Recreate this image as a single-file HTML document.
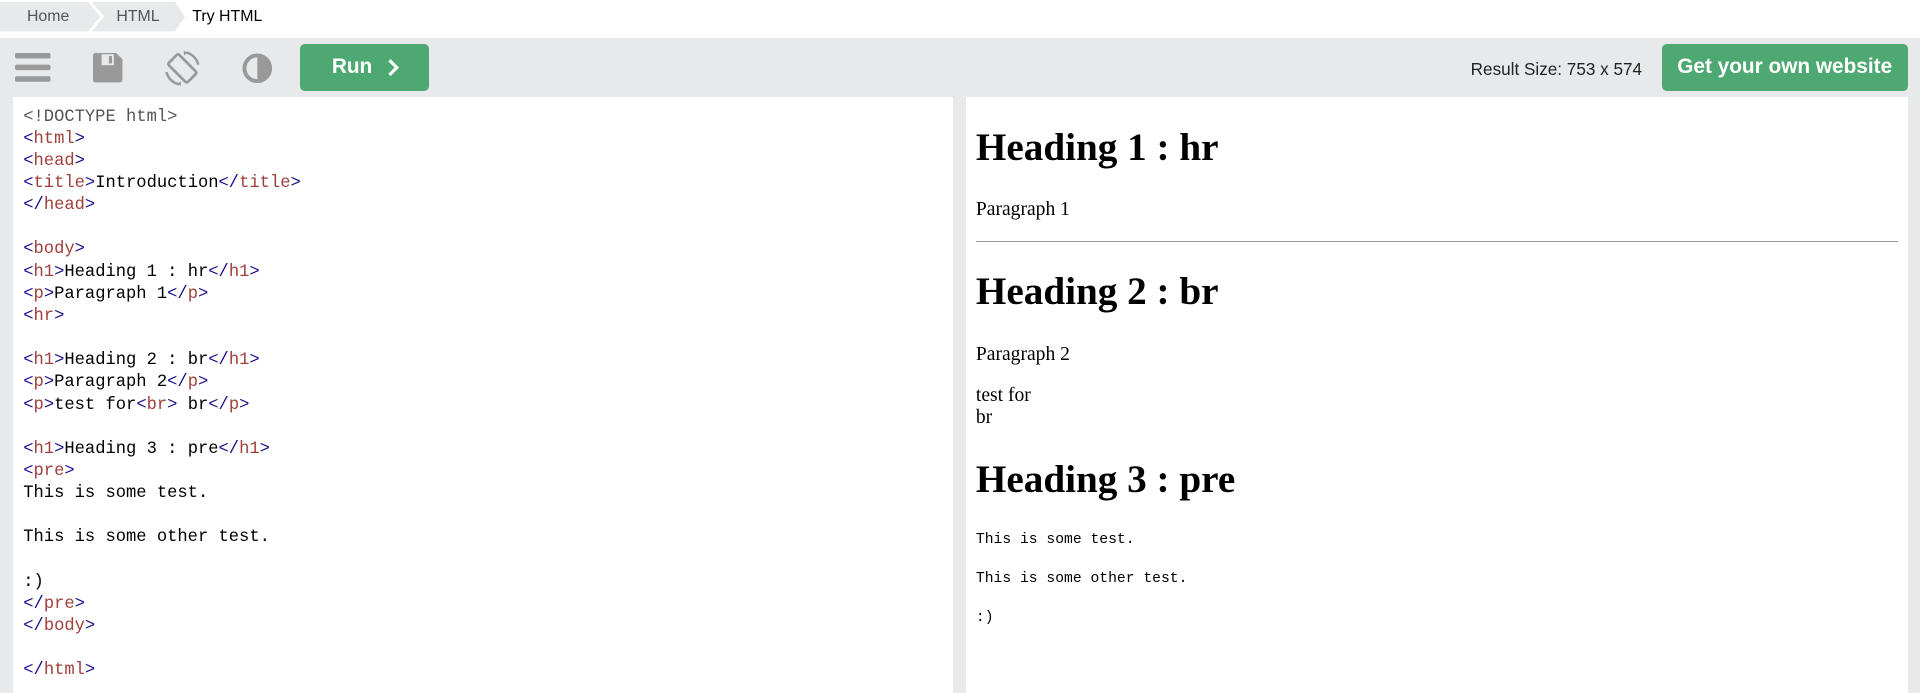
<!DOCTYPE html>
<html><head><meta charset="utf-8"><style>
html,body{margin:0;padding:0;background:#fff;overflow:hidden}
#z{zoom:1.22449;width:1568px;height:566px;position:relative;overflow:hidden;font-family:"Liberation Sans",sans-serif}
.abs{position:absolute}
.bc{position:absolute;top:2px;height:24px;font-size:13px;line-height:24px;color:#555}
.tb{position:absolute;top:31px;left:0;width:1568px;height:535px;background:#e7e9eb}
.btn{position:absolute;top:36px;height:38px;background:#4ea872;border-radius:4px;color:#fff;font-weight:bold}
.code{position:absolute;left:11px;top:79px;width:767px;height:487px;background:#fff;font-family:"Liberation Mono",monospace;font-size:14px;line-height:18.1px;white-space:pre;padding:8px 0 0 8px;box-sizing:border-box;color:#000}
.t{color:#170f8a}.n{color:#a0403a}.d{color:#555}
.res{position:absolute;left:789px;top:79px;width:769px;height:487px;background:#fff;font-family:"Liberation Serif",serif;font-size:16px;color:#000;overflow:hidden}
.res h1{font-size:32px;margin:21.44px 0;line-height:40px}
.res p{margin:16px 0;line-height:18px}
.res hr{border:0;border-top:1px solid #999;margin:9px 0 11px}
.res pre{font-family:"Liberation Mono",monospace;font-size:12px;margin:13px 0;line-height:16px}
</style></head><body><div id="z">
<svg class="abs" style="left:0;top:2px" width="160" height="24"><polygon points="0,0 72,0 82,12 72,24 0,24" fill="#e7e9eb"/><polygon points="75,0 143,0 151,12 143,24 75,24 85,12" fill="#e7e9eb"/></svg>
<div class="bc" style="left:22px">Home</div>
<div class="bc" style="left:95px">HTML</div>
<div class="bc" style="left:157px;color:#000">Try HTML</div>
<div class="tb"></div>
<svg class="abs" style="left:12px;top:43px" width="30" height="24"><rect x="0" y="0" width="29" height="4.5" rx="1.5" fill="#999"/><rect x="0" y="9.5" width="29" height="4.5" rx="1.5" fill="#999"/><rect x="0" y="19" width="29" height="4.5" rx="1.5" fill="#999"/></svg>
<svg class="abs" style="left:76px;top:43px" width="25" height="25"><path d="M2 0H19L24 5V22a2 2 0 0 1-2 2H2a2 2 0 0 1-2-2V2a2 2 0 0 1 2-2z" fill="#999"/><rect x="7" y="1" width="10" height="9" fill="#e7e9eb"/><rect x="13" y="2.5" width="2.5" height="6" fill="#999"/></svg>
<svg class="abs" style="left:134px;top:41px" width="30" height="30" viewBox="0 0 30 30"><g transform="rotate(-45 15 15)"><rect x="9" y="4" width="12" height="22" rx="1.5" fill="none" stroke="#999" stroke-width="2.2"/></g><path d="M18 2A13.5 13.5 0 0 1 28 12" fill="none" stroke="#999" stroke-width="2"/><path d="M12 28A13.5 13.5 0 0 1 2 18" fill="none" stroke="#999" stroke-width="2"/><path d="M16 0.5L19 2.3L16.5 4.5z" fill="#999"/><path d="M14 29.5L11 27.7L13.5 25.5z" fill="#999"/></svg>
<svg class="abs" style="left:198px;top:43px" width="25" height="25"><circle cx="12.5" cy="12.5" r="10.5" fill="none" stroke="#999" stroke-width="3.2"/><path d="M12.5 2a10.5 10.5 0 0 1 0 21z" fill="#999"/></svg>
<div class="btn" style="left:245px;width:105px;font-size:17px;line-height:38px"><span style="position:absolute;left:26px">Run</span><svg class="abs" style="left:71px;top:12px" width="10" height="14"><path d="M2 1L8 7L2 13" fill="none" stroke="#fff" stroke-width="2.6"/></svg></div>
<div class="abs" style="left:1150px;top:48px;width:191px;text-align:right;font-size:14px;color:#222">Result Size: 753 x 574</div>
<div class="btn" style="left:1357px;width:201px;font-size:17px;line-height:38px;text-align:center">Get your own website</div>
<div class="code"><span class="d">&lt;!DOCTYPE html&gt;</span>
<span class="t">&lt;</span><span class="n">html</span><span class="t">&gt;</span>
<span class="t">&lt;</span><span class="n">head</span><span class="t">&gt;</span>
<span class="t">&lt;</span><span class="n">title</span><span class="t">&gt;</span>Introduction<span class="t">&lt;/</span><span class="n">title</span><span class="t">&gt;</span>
<span class="t">&lt;/</span><span class="n">head</span><span class="t">&gt;</span>

<span class="t">&lt;</span><span class="n">body</span><span class="t">&gt;</span>
<span class="t">&lt;</span><span class="n">h1</span><span class="t">&gt;</span>Heading 1 : hr<span class="t">&lt;/</span><span class="n">h1</span><span class="t">&gt;</span>
<span class="t">&lt;</span><span class="n">p</span><span class="t">&gt;</span>Paragraph 1<span class="t">&lt;/</span><span class="n">p</span><span class="t">&gt;</span>
<span class="t">&lt;</span><span class="n">hr</span><span class="t">&gt;</span>

<span class="t">&lt;</span><span class="n">h1</span><span class="t">&gt;</span>Heading 2 : br<span class="t">&lt;/</span><span class="n">h1</span><span class="t">&gt;</span>
<span class="t">&lt;</span><span class="n">p</span><span class="t">&gt;</span>Paragraph 2<span class="t">&lt;/</span><span class="n">p</span><span class="t">&gt;</span>
<span class="t">&lt;</span><span class="n">p</span><span class="t">&gt;</span>test for<span class="t">&lt;</span><span class="n">br</span><span class="t">&gt;</span> br<span class="t">&lt;/</span><span class="n">p</span><span class="t">&gt;</span>

<span class="t">&lt;</span><span class="n">h1</span><span class="t">&gt;</span>Heading 3 : pre<span class="t">&lt;/</span><span class="n">h1</span><span class="t">&gt;</span>
<span class="t">&lt;</span><span class="n">pre</span><span class="t">&gt;</span>
This is some test.

This is some other test.

:)
<span class="t">&lt;/</span><span class="n">pre</span><span class="t">&gt;</span>
<span class="t">&lt;/</span><span class="n">body</span><span class="t">&gt;</span>

<span class="t">&lt;/</span><span class="n">html</span><span class="t">&gt;</span></div>
<div class="res"><div style="padding:1px 8px 0 8px">
<h1>Heading 1 : hr</h1>
<p>Paragraph 1</p>
<hr>
<h1>Heading 2 : br</h1>
<p>Paragraph 2</p>
<p>test for<br> br</p>
<h1>Heading 3 : pre</h1>
<pre>This is some test.

This is some other test.

:)</pre>
</div></div>
</div></body></html>
